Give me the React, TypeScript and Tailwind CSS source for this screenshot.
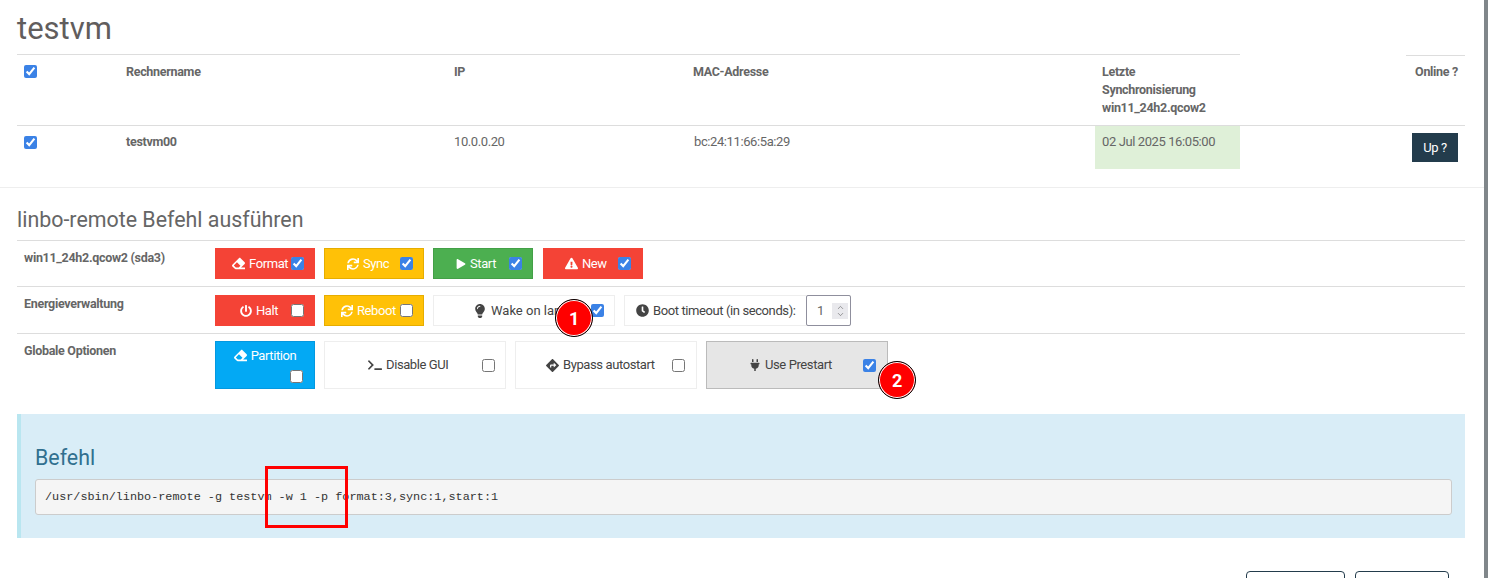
import type { ReactNode } from 'react'
import { ChevronDown, ChevronUp } from 'lucide-react'
import {
  FaClock,
  FaDirections,
  FaEraser,
  FaExclamationTriangle,
  FaLightbulb,
  FaPlay,
  FaPlug,
  FaPowerOff,
  FaSync,
  FaTerminal,
} from 'react-icons/fa'

function Check({ on = false, className = '' }: { on?: boolean; className?: string }) {
  return (
    <input
      type="checkbox"
      checked={on}
      readOnly
      className={`m-0 h-[13px] w-[13px] shrink-0 accent-[#3b82e6] ${className}`}
    />
  )
}

function Opt({ className, icon, label, on }: { className: string; icon: ReactNode; label: string; on?: boolean }) {
  return (
    <div className={`flex items-center border ${className}`}>
      <span className="mr-1 shrink-0">{icon}</span>
      <span className="whitespace-nowrap">{label}</span>
      <Check on={on} className="opt-check" />
    </div>
  )
}

function Badge({ n, className }: { n: number; className: string }) {
  return (
    <div
      className={`absolute flex h-[38px] w-[38px] items-center justify-center rounded-full border border-black bg-[#f00] text-[18px] font-bold text-white shadow-[inset_0_0_0_1px_#fff] ${className}`}
    >
      {n}
    </div>
  )
}

export default function App() {
  return (
    <div className="relative flex h-[578px] w-[1488px] overflow-hidden bg-white font-['Roboto','Noto_Sans',sans-serif] text-[13px] tracking-[-0.4px] text-[#666]">
      <div className="w-[1484px] shrink-0">
        <div className="pl-[17px] pr-[19px]">
          <h1 className="h-[54px] pt-[10px] text-[31px] leading-[38px] tracking-normal text-[#615d5d]">testvm</h1>

          <div className="flex h-[71px] text-[12.5px] font-bold tracking-[-0.3px]">
            <div className="flex w-[1223px] border-t border-[#ddd]">
              <div className="w-[109px] pl-[7px] pt-[10px]">
                <Check on />
              </div>
              <div className="w-[328px] pt-[8px]">Rechnername</div>
              <div className="w-[239px] pt-[8px]">IP</div>
              <div className="w-[409px] pt-[8px]">MAC-Adresse</div>
              <div className="pt-[8px] leading-[18px]">
                Letzte
                <br />
                Synchronisierung
                <br />
                win11_24h2.qcow2
              </div>
            </div>
            <div className="ml-[166px] mt-px w-[59px] border-t border-[#ddd] pt-[7px] text-right">
              <span className="pr-[7px]">Online ?</span>
            </div>
          </div>

          <div className="flex h-[44px] border-t border-[#ddd]">
            <div className="w-[109px] pl-[7px] pt-[9px]">
              <Check on />
            </div>
            <div className="w-[328px] pt-[7px] text-[12.5px] font-bold tracking-[-0.3px]">testvm00</div>
            <div className="w-[240px] pt-[6px]">10.0.0.20</div>
            <div className="w-[401px] pt-[6px]">bc:24:11:66:5a:29</div>
            <div className="w-[145px] bg-[#dff0d8] pl-[7px] pt-[6px]">02 Jul 2025 16:05:00</div>
            <div className="flex flex-1 justify-end pr-[7px] pt-[7px]">
              <button className="h-[29px] w-[46px] bg-[#233c4c] text-[13px] text-white">Up ?</button>
            </div>
          </div>
        </div>

        <div className="mt-[18px] border-t border-[#eee] pl-[17px] pr-[19px]">
          <h3 className="h-[52px] pt-[19px] text-[21.4px] leading-[26px] tracking-normal text-[#666]">linbo-remote Befehl ausführen</h3>

          <div className="flex h-[46px] border-t border-[#ddd]">
            <div className="w-[198px] pl-[7px] pt-[8px] text-[12.5px] font-bold tracking-[-0.3px]">win11_24h2.qcow2 (sda3)</div>
            <div className="flex gap-[9px] pt-[7px] text-white">
              <Opt className="h-[31px] w-[100px] border-[#f44336] bg-[#f44336] pl-[16px] [&_.opt-check]:ml-[3px]" icon={<FaEraser size={13} />} label="Format" on />
              <Opt className="h-[31px] w-[100px] border-[#e6ad00] bg-[#ffc107] pl-[22px] [&_.opt-check]:ml-[11px]" icon={<FaSync size={12} />} label="Sync" on />
              <Opt className="h-[31px] w-[100px] border-[#43a047] bg-[#4caf50] pl-[22px] [&_.opt-check]:ml-[13px]" icon={<FaPlay size={10} />} label="Start" on />
              <Opt className="ml-px h-[31px] w-[100px] border-[#f44336] bg-[#f44336] pl-[21px] [&_.opt-check]:ml-[11px]" icon={<FaExclamationTriangle size={13} />} label="New" on />
            </div>
          </div>

          <div className="flex h-[47px] border-t border-[#ddd]">
            <div className="w-[198px] pl-[7px] pt-[8px] text-[12.5px] font-bold tracking-[-0.3px]">Energieverwaltung</div>
            <div className="flex gap-[9px] pt-[8px]">
              <Opt className="h-[31px] w-[100px] border-[#f44336] bg-[#f44336] pl-[24px] text-white [&_.opt-check]:ml-[13px]" icon={<FaPowerOff size={12} />} label="Halt" />
              <Opt className="h-[31px] w-[100px] border-[#e6ad00] bg-[#ffc107] pl-[16px] text-white [&_.opt-check]:ml-[4px]" icon={<FaSync size={12} />} label="Reboot" />
              <Opt className="h-[31px] w-[182px] border-[#eee] bg-white pl-[39px] tracking-normal text-[#444] [&_.opt-check]:ml-[30px]" icon={<FaLightbulb size={14} />} label="Wake on lan" on />
              <div className="flex h-[31px] w-[227px] items-center border-y border-l border-[#eee] pl-[11px] text-[#444]">
                <FaClock size={13} className="mr-1 shrink-0" />
                <span className="whitespace-nowrap">Boot timeout (in seconds):</span>
                <div className="ml-auto flex h-[31px] w-[45px] items-center justify-between rounded-[2px] border border-[#8f8f9d] pl-[10px] pr-[2px] text-[#666]">
                  1
                  <span className="flex h-[16px] w-[16px] flex-col items-center justify-center bg-[#e9e9ed] text-[#555]">
                    <ChevronUp size={9} strokeWidth={1.5} className="-mb-px" />
                    <ChevronDown size={9} strokeWidth={1.5} className="-mt-px" />
                  </span>
                </div>
              </div>
            </div>
          </div>

          <div className="flex h-[81px] border-t border-[#ddd]">
            <div className="w-[198px] pl-[7px] pt-[8px] text-[12.5px] font-bold tracking-[-0.3px]">Globale Optionen</div>
            <div className="flex gap-[9px] pt-[7px]">
              <div className="flex h-[48px] w-[100px] flex-col items-end border border-[#0398e0] bg-[#03a9f4] pr-[11px] pt-[4px] text-white">
                <div className="flex w-full items-center justify-center pl-[11px]">
                  <FaEraser size={13} className="mr-1" />
                  Partition
                </div>
                <Check className="mt-[4px]" />
              </div>
              <Opt className="h-[48px] w-[182px] border-[#eee] bg-white pl-[43px] text-[#444] [&_.opt-check]:ml-[34px]" icon={<FaTerminal size={14} />} label="Disable GUI" />
              <Opt className="h-[48px] w-[182px] border-[#eee] bg-white pl-[30px] text-[#444] [&_.opt-check]:ml-[17px]" icon={<FaDirections size={13} />} label="Bypass autostart" />
              <Opt className="h-[48px] w-[182px] border-[#bbb] bg-[#e6e6e6] pl-[42px] text-[#444] [&_.opt-check]:ml-[31px]" icon={<FaPlug size={12} />} label="Use Prestart" on />
            </div>
          </div>

          <div className="h-[124px] border-l-[4px] border-[#b9e6f0] bg-[#d9edf7] pl-[14px] pr-[13px] pt-[31px]">
            <h3 className="h-[34px] text-[21.4px] leading-[26px] tracking-normal text-[#31708f]">Befehl</h3>
            <pre className="h-[36px] rounded-[3px] border border-[#ccc] bg-[#f5f5f5] px-[9px] py-[8px] font-['Liberation_Mono',monospace] text-[11.8px] leading-[18px] tracking-normal text-[#333]">
              /usr/sbin/linbo-remote -g testvm -w 1 -p format:3,sync:1,start:1
            </pre>
          </div>

          <div className="flex justify-end pr-[16px] pt-[33px]">
            <button className="mr-[10px] h-[30px] w-[99px] rounded-[4px] border border-[#233c4c] bg-white" />
            <button className="h-[30px] w-[94px] rounded-[4px] border border-[#233c4c] bg-white" />
          </div>
        </div>
      </div>
      <div className="w-[4px] bg-[#80868a]" />

      <Badge n={1} className="left-[555px] top-[299px]" />
      <Badge n={2} className="left-[878px] top-[361px]" />
      <div className="absolute left-[265px] top-[466px] h-[62px] w-[83px] border-[3px] border-[#f00]" />
    </div>
  )
}
